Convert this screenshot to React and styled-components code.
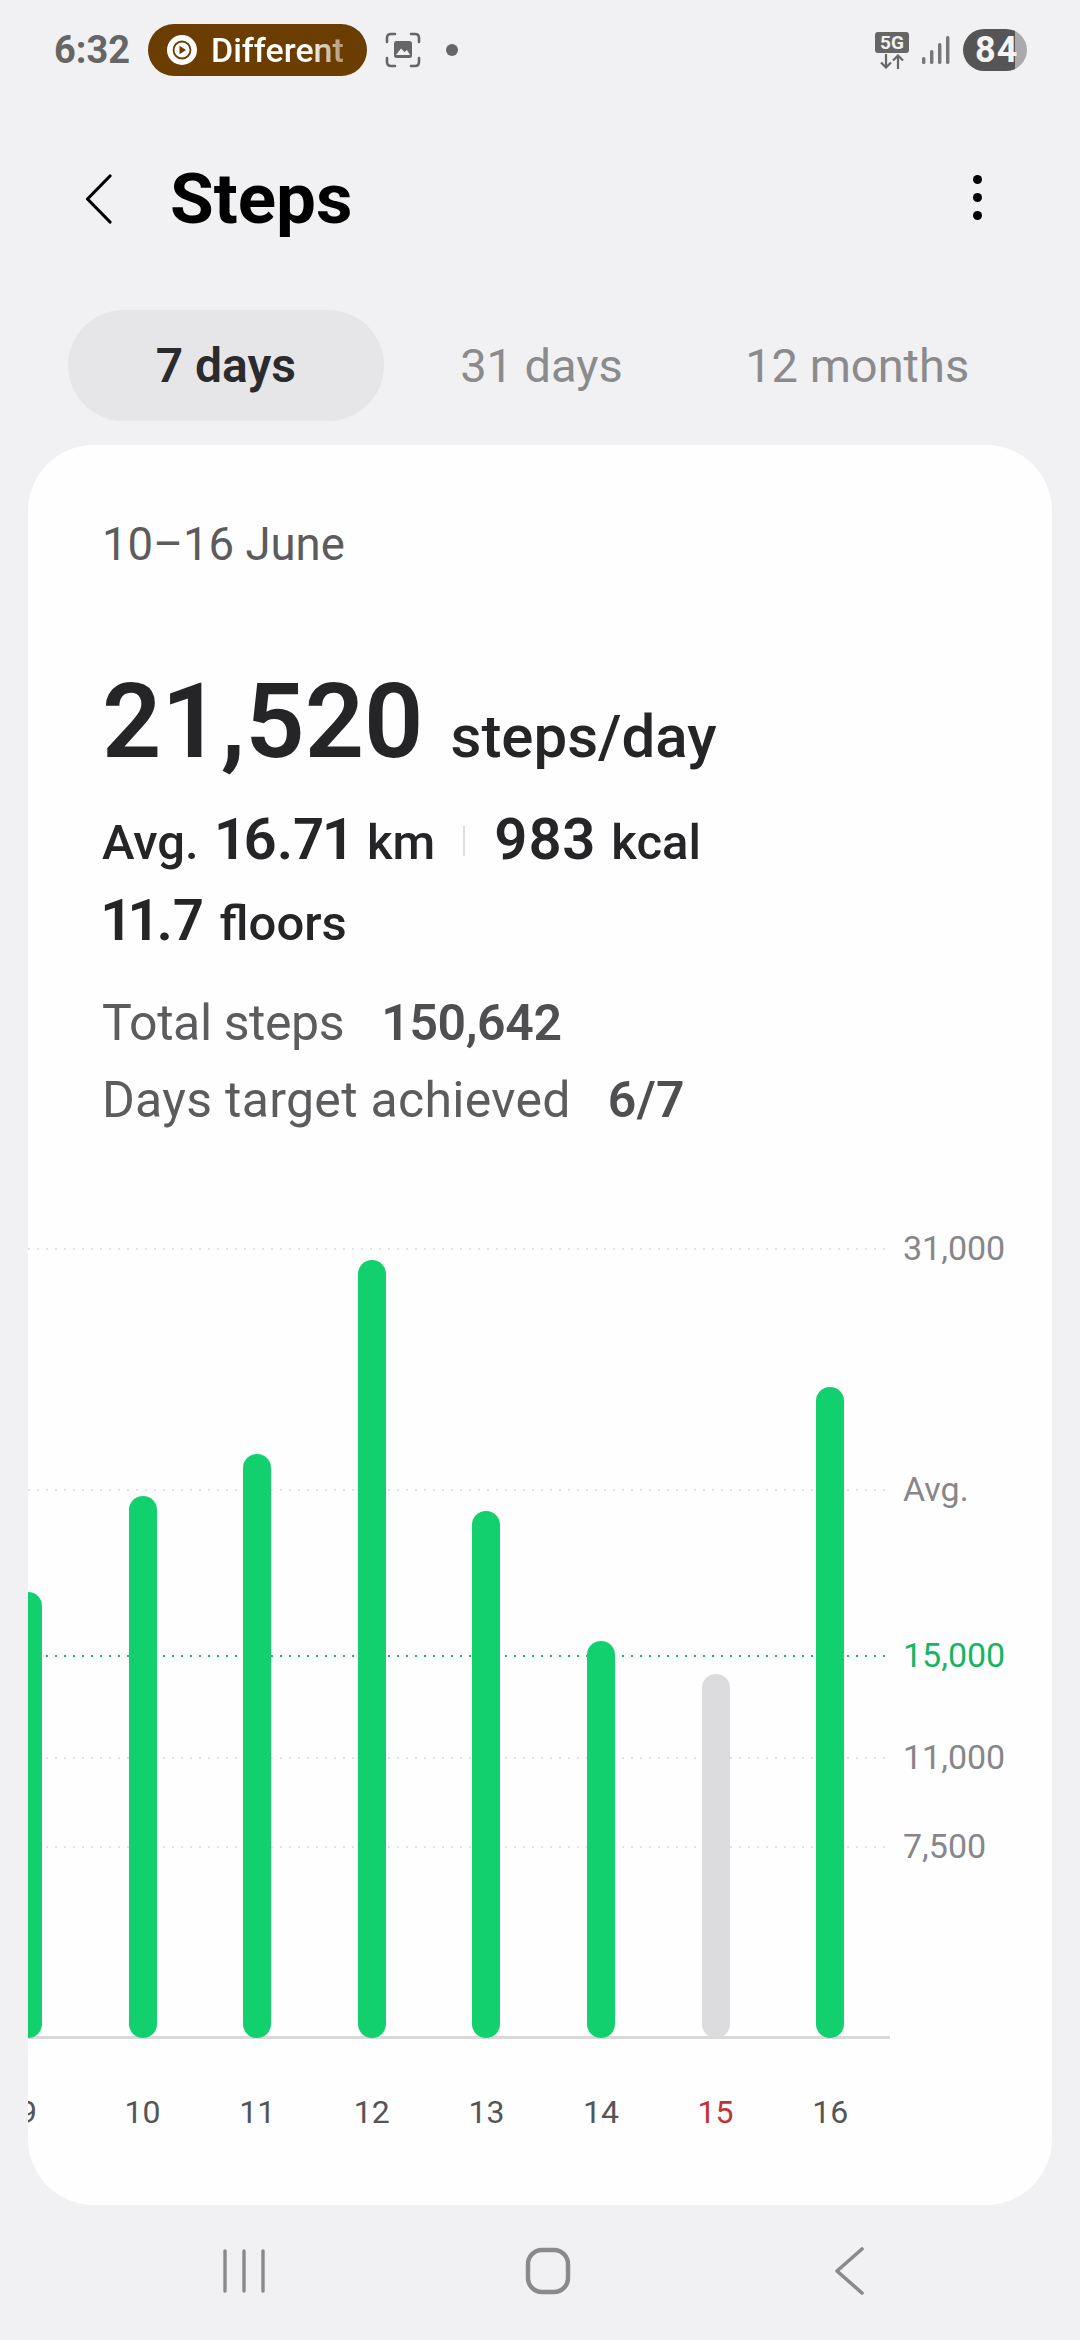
import React from "react";
import styled, { createGlobalStyle } from "styled-components";

const days = [
  { label: "9", top: 1592 },
  { label: "10", top: 1496 },
  { label: "11", top: 1454 },
  { label: "12", top: 1260 },
  { label: "13", top: 1511 },
  { label: "14", top: 1641 },
  { label: "15", top: 1674, missed: true },
  { label: "16", top: 1387 },
];

const PLOT_BOTTOM = 2038;
const PLOT_TOP = 1200;

const gridLines = [
  { label: "31,000", y: 1248 },
  { label: "Avg.", y: 1489 },
  { label: "15,000", y: 1655, target: true },
  { label: "11,000", y: 1757 },
  { label: "7,500", y: 1846 },
];

function App() {
  return (
    <Page>
      <GlobalStyle />

      <StatusBar>
        <StatusLeft>
          <Clock>6:32</Clock>
          <MediaPill>
            <svg width="30" height="30" viewBox="0 0 30 30">
              <circle cx="15" cy="15" r="15" fill="#fff" />
              <circle cx="15" cy="15" r="8.5" fill="none" stroke="#6b3d00" strokeWidth="1.8" />
              <path d="M12.5 10.8 L19 15 L12.5 19.2 Z" fill="#6b3d00" />
            </svg>
            <MediaTitle>Different</MediaTitle>
          </MediaPill>
          <svg width="36" height="36" viewBox="0 0 36 36" fill="none">
            <path
              d="M2 10 V6 Q2 2 6 2 H10 M26 2 H30 Q34 2 34 6 V10 M34 26 V30 Q34 34 30 34 H26 M10 34 H6 Q2 34 2 30 V26"
              stroke="#666"
              strokeWidth="2.6"
              strokeLinecap="round"
            />
            <rect x="9" y="9" width="18" height="17" rx="2.5" fill="#666" />
            <path d="M11 23 L16 16.5 L19.5 20 L22 18 L25 23 Z" fill="#f1f1f3" />
          </svg>
          <StatusDot />
        </StatusLeft>
        <StatusRight>
          <NetworkIcon>
            <NetworkBadge>5G</NetworkBadge>
            <svg width="26" height="15" viewBox="0 0 26 15" fill="none" stroke="#666" strokeWidth="2.2">
              <path d="M7 0 V13 M2 8.5 L7 13.5 L12 8.5" />
              <path d="M19 15 V2 M14 6.5 L19 1.5 L24 6.5" />
            </svg>
          </NetworkIcon>
          <svg width="28" height="30" viewBox="0 0 28 30" fill="#777">
            <rect x="0" y="22" width="3.4" height="7" rx="1.5" />
            <rect x="8" y="15" width="3.4" height="14" rx="1.5" />
            <rect x="16" y="8" width="3.4" height="21" rx="1.5" />
            <rect x="24" y="1" width="3.4" height="28" rx="1.5" />
          </svg>
          <Battery>84</Battery>
        </StatusRight>
      </StatusBar>

      <Header>
        <BackButton>
          <svg width="27" height="50" viewBox="0 0 27 50" fill="none">
            <path d="M25 2 L2.5 25 L25 48" stroke="#000" strokeWidth="3.2" strokeLinecap="round" strokeLinejoin="round" />
          </svg>
        </BackButton>
        <Title>Steps</Title>
        <MoreButton>
          <i />
          <i />
          <i />
        </MoreButton>
      </Header>

      <Tabs>
        <Tab $active>7 days</Tab>
        <Tab>31 days</Tab>
        <Tab>12 months</Tab>
      </Tabs>

      <Card>
        <DateRange>10–16 June</DateRange>

        <HeroRow>
          <HeroValue>21,520</HeroValue>
          <HeroUnit>steps/day</HeroUnit>
        </HeroRow>

        <StatRow>
          <Unit>Avg.</Unit>
          <StatValue>16.71</StatValue>
          <Unit>km</Unit>
          <Separator />
          <StatValue>983</StatValue>
          <Unit>kcal</Unit>
        </StatRow>
        <StatRow>
          <StatValue>11.7</StatValue>
          <Unit>floors</Unit>
        </StatRow>

        <Totals>
          <TotalsRow $spacing={-0.4}>
            Total steps<b>150,642</b>
          </TotalsRow>
          <TotalsRow $spacing={0.3}>
            Days target achieved<b>6/7</b>
          </TotalsRow>
        </Totals>

        <Chart>
          <Plot>
            {gridLines.map((line) => (
              <GridRow key={line.label} $target={line.target} style={{ top: line.y - PLOT_TOP }}>
                <span>{line.label}</span>
              </GridRow>
            ))}
            <Baseline />
            <Columns>
              {days.map((day) => (
                <Bar key={day.label} $missed={day.missed} style={{ height: PLOT_BOTTOM - day.top }} />
              ))}
            </Columns>
          </Plot>
          <Labels>
            {days.map((day) => (
              <DayLabel key={day.label} $missed={day.missed}>
                {day.label}
              </DayLabel>
            ))}
          </Labels>
        </Chart>
      </Card>

      <NavBar>
        <svg width="44" height="46" viewBox="0 0 44 46" stroke="#8a8a8c" strokeWidth="3.4" strokeLinecap="round">
          <path d="M3 3 V43 M22 3 V43 M41 3 V43" />
        </svg>
        <HomeIcon width="46" height="48" viewBox="0 0 46 48" fill="none" stroke="#8a8a8c" strokeWidth="4.4">
          <rect x="3" y="3" width="40" height="42" rx="14" />
        </HomeIcon>
        <svg width="30" height="48" viewBox="0 0 30 48" fill="none" stroke="#8a8a8c" strokeWidth="3.6" strokeLinecap="round" strokeLinejoin="round">
          <path d="M28 2 L3 24 L28 46" />
        </svg>
      </NavBar>
    </Page>
  );
}

const GlobalStyle = createGlobalStyle`
  html, body {
    margin: 0;
    padding: 0;
    background: #f1f1f3;
  }
  * {
    box-sizing: border-box;
  }
`;

const Page = styled.div`
  width: 1080px;
  height: 2340px;
  overflow: hidden;
  background: #f1f1f3;
  font-family: Roboto, "Noto Sans", sans-serif;
  display: flex;
  flex-direction: column;
`;

const StatusBar = styled.div`
  height: 100px;
  flex: none;
  padding: 0 53px 0 54px;
  display: flex;
  align-items: center;
  justify-content: space-between;
`;

const StatusLeft = styled.div`
  display: flex;
  align-items: center;
`;

const Clock = styled.div`
  width: 94px;
  font-size: 38px;
  font-weight: 700;
  color: #666;
`;

const MediaPill = styled.div`
  width: 219px;
  height: 52px;
  margin-right: 18px;
  padding-left: 19px;
  border-radius: 26px;
  background: #6b3d00;
  display: flex;
  align-items: center;
  gap: 14px;
`;

const MediaTitle = styled.span`
  font-size: 34px;
  font-weight: 500;
  color: #fff;
  -webkit-mask-image: linear-gradient(90deg, #000 72%, rgba(0, 0, 0, 0.45) 100%);
  mask-image: linear-gradient(90deg, #000 72%, rgba(0, 0, 0, 0.45) 100%);
`;

const StatusDot = styled.span`
  width: 12px;
  height: 12px;
  margin-left: 25px;
  border-radius: 50%;
  background: #666;
`;

const StatusRight = styled.div`
  display: flex;
  align-items: center;
  gap: 13px;
`;

const NetworkIcon = styled.div`
  width: 34px;
  display: flex;
  flex-direction: column;
  align-items: center;
  gap: 1px;
`;

const NetworkBadge = styled.div`
  width: 34px;
  height: 21px;
  border-radius: 3px;
  background: #666;
  color: #f1f1f3;
  font-size: 19px;
  font-weight: 700;
  line-height: 21px;
  text-align: center;
`;

const Battery = styled.div`
  width: 64px;
  height: 42px;
  border-radius: 21px;
  background: linear-gradient(90deg, #555 82%, #aaa 82%);
  color: #f4f4f4;
  font-size: 36px;
  font-weight: 700;
  line-height: 42px;
  padding-left: 12px;
  letter-spacing: 1px;
`;

const Header = styled.div`
  height: 97px;
  flex: none;
  margin-top: 50px;
  padding: 0 98px 0 85px;
  display: flex;
  align-items: center;
`;

const BackButton = styled.div`
  width: 85px;
  display: flex;
`;

const Title = styled.h1`
  flex: 1;
  margin: 0;
  font-size: 71px;
  font-weight: 700;
  color: #000;
`;

const MoreButton = styled.div`
  margin-bottom: 3px;
  display: flex;
  flex-direction: column;
  gap: 9px;

  i {
    display: block;
    width: 9px;
    height: 9px;
    border-radius: 50%;
    background: #000;
  }
`;

const Tabs = styled.div`
  flex: none;
  margin-top: 63px;
  padding: 0 65px 0 68px;
  display: grid;
  grid-template-columns: repeat(3, 1fr);
`;

const Tab = styled.div`
  height: 111px;
  border-radius: 56px;
  background: ${(p) => (p.$active ? "#e6e6e8" : "transparent")};
  color: ${(p) => (p.$active ? "#2b2b2d" : "#8b8b8d")};
  font-size: ${(p) => (p.$active ? 48 : 47)}px;
  font-weight: ${(p) => (p.$active ? 600 : 400)};
  line-height: 111px;
  text-align: center;
`;

const Card = styled.div`
  height: 1760px;
  flex: none;
  margin: 24px 28px 0;
  padding-top: 70px;
  border-radius: 66px;
  background: #fefefe;
  overflow: hidden;
`;

const DateRange = styled.div`
  padding-left: 74px;
  font-size: 45.5px;
  line-height: 60px;
  color: #5c5c5e;
`;

const HeroRow = styled.div`
  margin-top: 89px;
  padding-left: 74px;
  display: flex;
  align-items: baseline;
  gap: 27px;
  color: #252527;
`;

const HeroValue = styled.span`
  font-size: 104px;
  line-height: 116px;
  font-weight: 600;
`;

const HeroUnit = styled.span`
  font-size: 60px;
  font-weight: 500;
`;

const StatRow = styled.div`
  height: 72px;
  margin-top: 9px;
  padding-left: 74px;
  display: flex;
  align-items: baseline;
  color: #252527;

  ${HeroRow} + & {
    margin-top: 25px;
  }
`;

const StatValue = styled.span`
  margin-right: 16px;
  font-size: 58px;
  font-weight: 600;
  font-feature-settings: "pnum";
`;

const Unit = styled.span`
  margin-right: 17px;
  font-size: 49px;
  font-weight: 500;
`;

const Separator = styled.span`
  width: 2px;
  height: 30px;
  margin: 0 29px 0 11px;
  background: #dcdcdc;
  align-self: center;
`;

const Totals = styled.div`
  margin-top: 34px;
  padding-left: 74px;
  display: flex;
  flex-direction: column;
  gap: 15px;
`;

const TotalsRow = styled.div`
  font-size: 50px;
  line-height: 62px;
  letter-spacing: ${(p) => p.$spacing}px;
  color: #5c5c5e;

  b {
    margin-left: 37px;
    font-weight: 600;
    color: #4f4f51;
  }
`;

const Chart = styled.div`
  margin-top: 69px;
`;

const Plot = styled.div`
  position: relative;
  height: ${PLOT_BOTTOM - PLOT_TOP}px;
  display: flex;
  align-items: flex-end;
`;

const GridRow = styled.div`
  position: absolute;
  left: 0;
  width: 862px;
  height: 2px;
  background-image: repeating-linear-gradient(
    90deg,
    ${(p) => (p.$target ? "#1bb56c" : "#e3e3e5")} 0 2px,
    transparent 2px 9px
  );

  span {
    position: absolute;
    left: 875px;
    top: -20px;
    font-size: 34px;
    line-height: 40px;
    white-space: nowrap;
    color: ${(p) => (p.$target ? "#16b566" : "#87878a")};
  }
`;

const Columns = styled.div`
  position: relative;
  margin-left: -57.3px;
  display: grid;
  grid-template-columns: repeat(8, 114.6px);
  align-items: end;
  justify-items: center;
`;

const Bar = styled.div`
  width: 28px;
  border-radius: 14px;
  background: ${(p) => (p.$missed ? "#dcdcde" : "#13d06f")};
`;

const Baseline = styled.div`
  position: absolute;
  left: 0;
  bottom: -1px;
  width: 862px;
  height: 3px;
  background: #d9d9db;
`;

const Labels = styled.div`
  margin-left: -57.3px;
  margin-top: 54px;
  display: grid;
  grid-template-columns: repeat(8, 114.6px);
  justify-items: center;
`;

const DayLabel = styled.span`
  font-size: 32px;
  line-height: 40px;
  color: ${(p) => (p.$missed ? "#c23434" : "#555557")};
`;

const NavBar = styled.div`
  height: 135px;
  flex: none;
  padding: 0 0 4px 222px;
  display: flex;
  align-items: center;
`;

const HomeIcon = styled.svg`
  margin: 0 263px 0 259px;
`;

export default App;
